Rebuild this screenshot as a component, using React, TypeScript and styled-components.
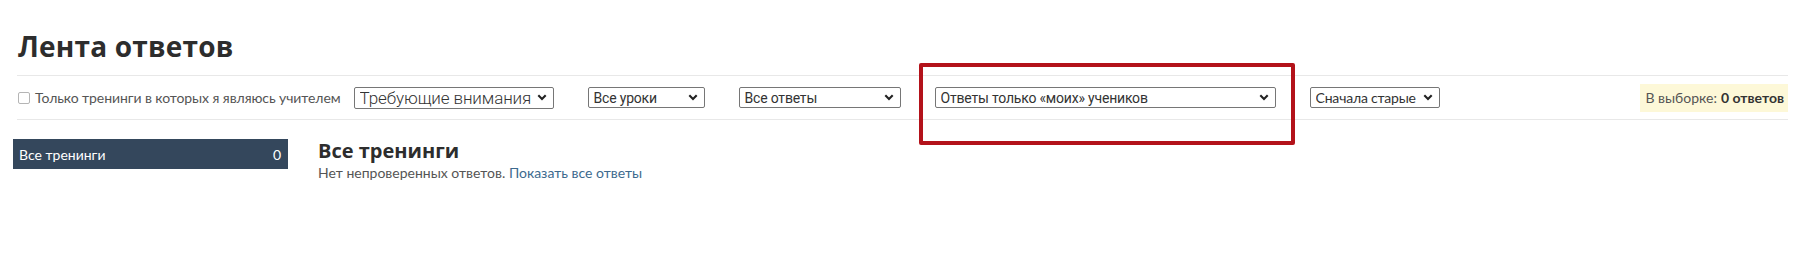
import styled, { createGlobalStyle } from 'styled-components'

/**
 * Лента ответов: фильтры + список тренингов
 */

const GlobalStyle = createGlobalStyle`
  html, body {
    margin: 0;
    padding: 0;
    background: #fff;
    font-family: Lato, 'Open Sans', 'Liberation Sans', sans-serif;
    color: #333;
  }
`

const Chevron = () => (
  <svg width="10" height="7" viewBox="0 0 10 7" aria-hidden="true">
    <path d="M1.3 1.3 5 5 8.7 1.3" fill="none" stroke="#222" strokeWidth="2.1" />
  </svg>
)

const filters = [
  { text: 'Все уроки', width: 117 },
  { text: 'Все ответы', width: 162 },
  { text: 'Ответы только «моих» учеников', width: 341, marked: true },
  { text: 'Сначала старые', width: 130, plain: true },
]

export default function App() {
  return (
    <>
      <GlobalStyle />
      <PageStyle>
        <TitleStyle>Лента ответов</TitleStyle>

        <ToolbarStyle>
          <CheckLabelStyle>
            <input type="checkbox" />
            Только тренинги в которых я являюсь учителем
          </CheckLabelStyle>

          <FilterGroupStyle>
            <SelectBox $width={200} $large>
              <span>Требующие внимания</span>
              <Chevron />
            </SelectBox>

            {filters.map((f) => (
              <SelectBox key={f.text} $width={f.width} $plain={f.plain}>
                <span>{f.text}</span>
                <Chevron />
                {f.marked && <MarkerStyle />}
              </SelectBox>
            ))}
          </FilterGroupStyle>

          <CounterStyle>
            В выборке: <b>0 ответов</b>
          </CounterStyle>
        </ToolbarStyle>
      </PageStyle>

      <MainStyle>
        <SidebarStyle>
          <SideItemStyle className="is-active">
            <span>Все тренинги</span>
            <span>0</span>
          </SideItemStyle>
        </SidebarStyle>

        <ContentStyle>
          <h2>Все тренинги</h2>
          <p>
            Нет непроверенных ответов. <a href="#">Показать все ответы</a>
          </p>
        </ContentStyle>
      </MainStyle>
    </>
  )
}

const PageStyle = styled.div`
  padding: 0 6px 0 17px;
`

const TitleStyle = styled.h1`
  margin: 0;
  padding: 29px 0 12px 1px;
  font-family: 'Open Sans', sans-serif;
  font-size: 28px;
  line-height: 34px;
  font-weight: 700;
  color: #2d2d2d;
  letter-spacing: 0.2px;
`

const ToolbarStyle = styled.div`
  display: flex;
  align-items: center;
  gap: 13px;
  height: 45px;
  box-sizing: border-box;
  border-top: 1px solid #e8e8e8;
  border-bottom: 1px solid #e8e8e8;
`

const CheckLabelStyle = styled.label`
  display: flex;
  align-items: center;
  gap: 5px;
  font-size: 14px;
  letter-spacing: -0.08px;
  color: #555;
  white-space: nowrap;

  input {
    appearance: none;
    margin: 0 0 0 1px;
    width: 12px;
    height: 12px;
    border: 1px solid #b5b5b5;
    border-radius: 2px;
    background: #fff;
  }
`

const FilterGroupStyle = styled.div`
  display: flex;
  align-items: center;
  gap: 34px;
`

const SelectBox = styled.div<{ $width: number; $large?: boolean; $plain?: boolean }>`
  position: relative;
  width: ${(p) => p.$width}px;
  height: ${(p) => (p.$large ? 22 : 21)}px;
  box-sizing: border-box;
  display: flex;
  align-items: center;
  justify-content: space-between;
  gap: 4px;
  padding: 0 6px 0 5px;
  border: 1px solid #767676;
  border-radius: 2px;
  background: #fff;
  font-family: ${(p) => (p.$plain ? 'Lato' : 'Roboto')}, sans-serif;
  font-size: ${(p) => (p.$large ? '17px' : '14px')};
  font-weight: ${(p) => (p.$large ? 300 : 400)};
  letter-spacing: ${(p) => (p.$large ? '-0.1px' : '-0.2px')};
  color: #333;
  white-space: nowrap;
  cursor: pointer;

  span {
    overflow: hidden;
  }

  svg {
    flex-shrink: 0;
  }
`

const MarkerStyle = styled.div`
  position: absolute;
  left: -17px;
  top: -25px;
  width: 376px;
  height: 82px;
  box-sizing: border-box;
  border: 4px solid #b3121a;
  border-radius: 2px;
  pointer-events: none;
`

const CounterStyle = styled.div`
  margin-left: auto;
  height: 28px;
  display: flex;
  align-items: center;
  gap: 4px;
  padding: 0 4px 0 5px;
  background: #fdf8d8;
  font-size: 14px;
  color: #555;
  white-space: nowrap;

  b {
    color: #333;
    font-weight: 700;
  }
`

const MainStyle = styled.div`
  display: flex;
  align-items: flex-start;
  gap: 30px;
  padding: 19px 0 0 13px;
`

const SidebarStyle = styled.div`
  width: 275px;
  display: flex;
  flex-direction: column;
`

const SideItemStyle = styled.div`
  height: 30px;
  display: flex;
  align-items: center;
  justify-content: space-between;
  padding: 0 7px 0 6px;
  font-size: 14px;
  color: #fff;
  background: #34475c;
`

const ContentStyle = styled.div`
  h2 {
    margin: 0;
    font-family: 'Open Sans', sans-serif;
    font-size: 20px;
    line-height: 24px;
    font-weight: 700;
    color: #2d2d2d;
  }

  p {
    margin: 0;
    font-size: 14px;
    line-height: 20px;
    color: #555;
  }

  a {
    color: #3d6a8e;
    text-decoration: none;
  }
`
